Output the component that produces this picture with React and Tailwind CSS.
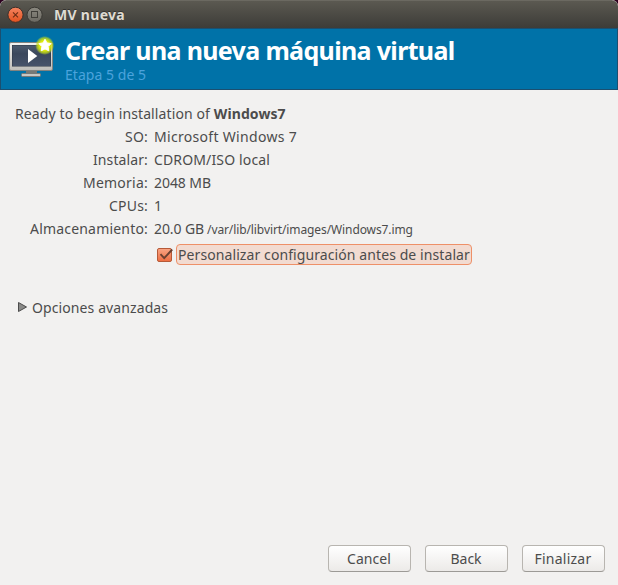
const rows = [
  { label: 'SO:', value: 'Microsoft Windows 7', ls: 'tracking-[0.2px]', vs: 'tracking-[0.31px]' },
  { label: 'Instalar:', value: 'CDROM/ISO local', ls: 'tracking-[0.11px]', vs: 'tracking-[0.14px]' },
  { label: 'Memoria:', value: '2048 MB', ls: 'tracking-[0.23px]', vs: 'tracking-[-0.06px]' },
  { label: 'CPUs:', value: '1', ls: 'tracking-[0.2px]', vs: '' },
  {
    label: 'Almacenamiento:',
    value: '20.0 GB',
    ls: 'tracking-[0.19px]',
    vs: 'tracking-[-0.1px]',
    path: '/var/lib/libvirt/images/Windows7.img',
  },
];

function TitleBar() {
  return (
    <div className="flex h-7 shrink-0 items-center rounded-t-[6px] border-t border-[#6b6961] bg-linear-to-b from-[#5b5951] to-[#3d3c38] pl-[6px]">
      <svg width="38" height="18" viewBox="0 0 38 18" className="mt-px">
        <defs>
          <linearGradient id="close" x1="0" y1="0" x2="0" y2="1">
            <stop offset="0" stopColor="#f58561" />
            <stop offset="1" stopColor="#e2511e" />
          </linearGradient>
          <linearGradient id="max" x1="0" y1="0" x2="0" y2="1">
            <stop offset="0" stopColor="#8b8980" />
            <stop offset="1" stopColor="#6b6962" />
          </linearGradient>
        </defs>
        <circle cx="9.5" cy="8.8" r="7.6" fill="url(#close)" stroke="#3a302a" />
        <path d="M7 6.3l5 5M12 6.3l-5 5" stroke="#6b2d15" strokeWidth="1.1" />
        <circle cx="28.6" cy="8.8" r="7.6" fill="url(#max)" stroke="#393833" />
        <rect x="25.5" y="5.5" width="6" height="6" fill="none" stroke="#3f3e39" />
      </svg>
      <span className="ml-[10px] text-[14px] leading-[20px] font-bold tracking-[0.3px] text-[#dfdbd2] [text-shadow:0_-1px_0_#33322e]">
        MV nueva
      </span>
    </div>
  );
}

function MonitorIcon() {
  return (
    <svg width="48" height="46" viewBox="0 0 48 46" className="shrink-0">
      <defs>
        <radialGradient id="glow">
          <stop offset="0" stopColor="#f4f400" />
          <stop offset="0.55" stopColor="#dbe80c" />
          <stop offset="0.8" stopColor="#c4dc18" stopOpacity="0.7" />
          <stop offset="1" stopColor="#a5c930" stopOpacity="0" />
        </radialGradient>
        <linearGradient id="frame" x1="0" y1="0" x2="0" y2="1">
          <stop offset="0" stopColor="#f4f4f2" />
          <stop offset="1" stopColor="#bdbdb9" />
        </linearGradient>
        <linearGradient id="screen" x1="0" y1="0" x2="0" y2="1">
          <stop offset="0" stopColor="#4b5a6d" />
          <stop offset="0.4" stopColor="#3b485d" />
          <stop offset="1" stopColor="#46536a" />
        </linearGradient>
      </defs>
      <rect x="18" y="34" width="11" height="5" fill="#777976" />
      <rect x="13.5" y="37.5" width="19" height="3" rx="1" fill="#c6c7c4" stroke="#777976" />
      <rect x="1.5" y="6.5" width="43" height="28" rx="1.5" fill="url(#frame)" stroke="#82837f" />
      <rect x="4" y="9" width="39" height="21.5" fill="#2d3644" />
      <rect x="4.5" y="9.5" width="38" height="20.5" fill="url(#screen)" />
      <path d="M20 13v14l9.3-7z" fill="#fff" />
      <circle cx="36.7" cy="9.5" r="9.6" fill="url(#glow)" />
      <path
        d="M37 3.2l1.9 3.7 4.2.7-3 3 .7 4.2-3.8-1.9-3.8 1.9.7-4.2-3-3 4.2-.7z"
        fill="#fff"
        stroke="#fff"
        strokeWidth="1"
        strokeLinejoin="round"
      />
    </svg>
  );
}

function Header() {
  return (
    <header className="flex h-[62px] shrink-0 border border-[#1b4f70] bg-[#0072a8] pt-[7px] pl-[7px]">
      <MonitorIcon />
      <div className="-mt-px ml-[9px] whitespace-nowrap">
        <h1 className="text-[25px] leading-[30px] font-bold tracking-[-0.66px] text-white">
          Crear una nueva máquina virtual
        </h1>
        <p className="mt-px text-[14px] leading-[18px] tracking-[0.04px] text-[#4ba3dc]">Etapa 5 de 5</p>
      </div>
    </header>
  );
}

function Button({ children, spacing }) {
  return (
    <button
      className={`h-[27px] w-[83px] rounded-[4px] border border-[#b8b5b0] border-b-[#9c9a96] bg-linear-to-b from-white to-[#eceae8] pr-px text-center leading-[25px] ${spacing}`}
    >
      {children}
    </button>
  );
}

export default function App() {
  return (
    <div className="bg-[#2c001e]">
      <div className="flex h-[585px] w-[618px] flex-col overflow-hidden rounded-t-[6px] bg-[#f2f1f0] font-['Noto_Sans','Open_Sans',sans-serif] text-[14px] leading-[23px] text-[#4c4c4c]">
        <TitleBar />
        <Header />
        <main className="flex-1 pt-[12px] pl-[15px] whitespace-nowrap">
          <p>
            <span className="tracking-[0.11px]">Ready to begin installation of </span>
            <b className="tracking-[0.1px]">Windows7</b>
          </p>
          <dl>
            {rows.map((r) => (
              <div key={r.label} className="flex h-[23px]">
                <dt className={`w-[133px] text-right ${r.ls}`}>{r.label}</dt>
                <dd className={`ml-[6px] ${r.vs}`}>{r.value}</dd>
                {r.path && (
                  <dd className="ml-[3px] pt-px text-[12px] tracking-[-0.1px]">{r.path}</dd>
                )}
              </div>
            ))}
          </dl>
          <label className="mt-[4px] ml-[141px] flex h-[21px] items-center">
            <svg width="18" height="18" viewBox="0 0 18 18">
              <defs>
                <linearGradient id="check" x1="0" y1="0" x2="0" y2="1">
                  <stop offset="0" stopColor="#f9a584" />
                  <stop offset="1" stopColor="#ee6d41" />
                </linearGradient>
              </defs>
              <rect x="1.5" y="2.5" width="14" height="13" rx="1.5" fill="url(#check)" stroke="#b65a38" />
              <path d="M4.5 8.2l3.7 4 8-8.7" fill="none" stroke="#6b4030" strokeWidth="1.9" />
            </svg>
            <span className="ml-[2px] h-[21px] w-[296px] rounded-[4px] border border-[#ee9068] bg-[#f2dbd1] pl-px leading-[19px] tracking-[0.09px]">
              Personalizar configuración antes de instalar
            </span>
          </label>
          <div className="mt-[31px] flex items-center">
            <svg width="12" height="12" viewBox="0 0 12 12" className="mb-[2px] ml-[2px]">
              <path d="M1.5 1.5v9l8-4.5z" fill="#8a8a88" stroke="#4c4c4c" />
            </svg>
            <span className="ml-[3px] tracking-[0.1px]">Opciones avanzadas</span>
          </div>
        </main>
        <footer className="flex shrink-0 justify-end gap-[14px] pr-[13px] pb-[13px]">
          <Button spacing="tracking-[0.07px]">Cancel</Button>
          <Button spacing="tracking-normal">Back</Button>
          <Button spacing="tracking-[0.24px]">Finalizar</Button>
        </footer>
      </div>
    </div>
  );
}
